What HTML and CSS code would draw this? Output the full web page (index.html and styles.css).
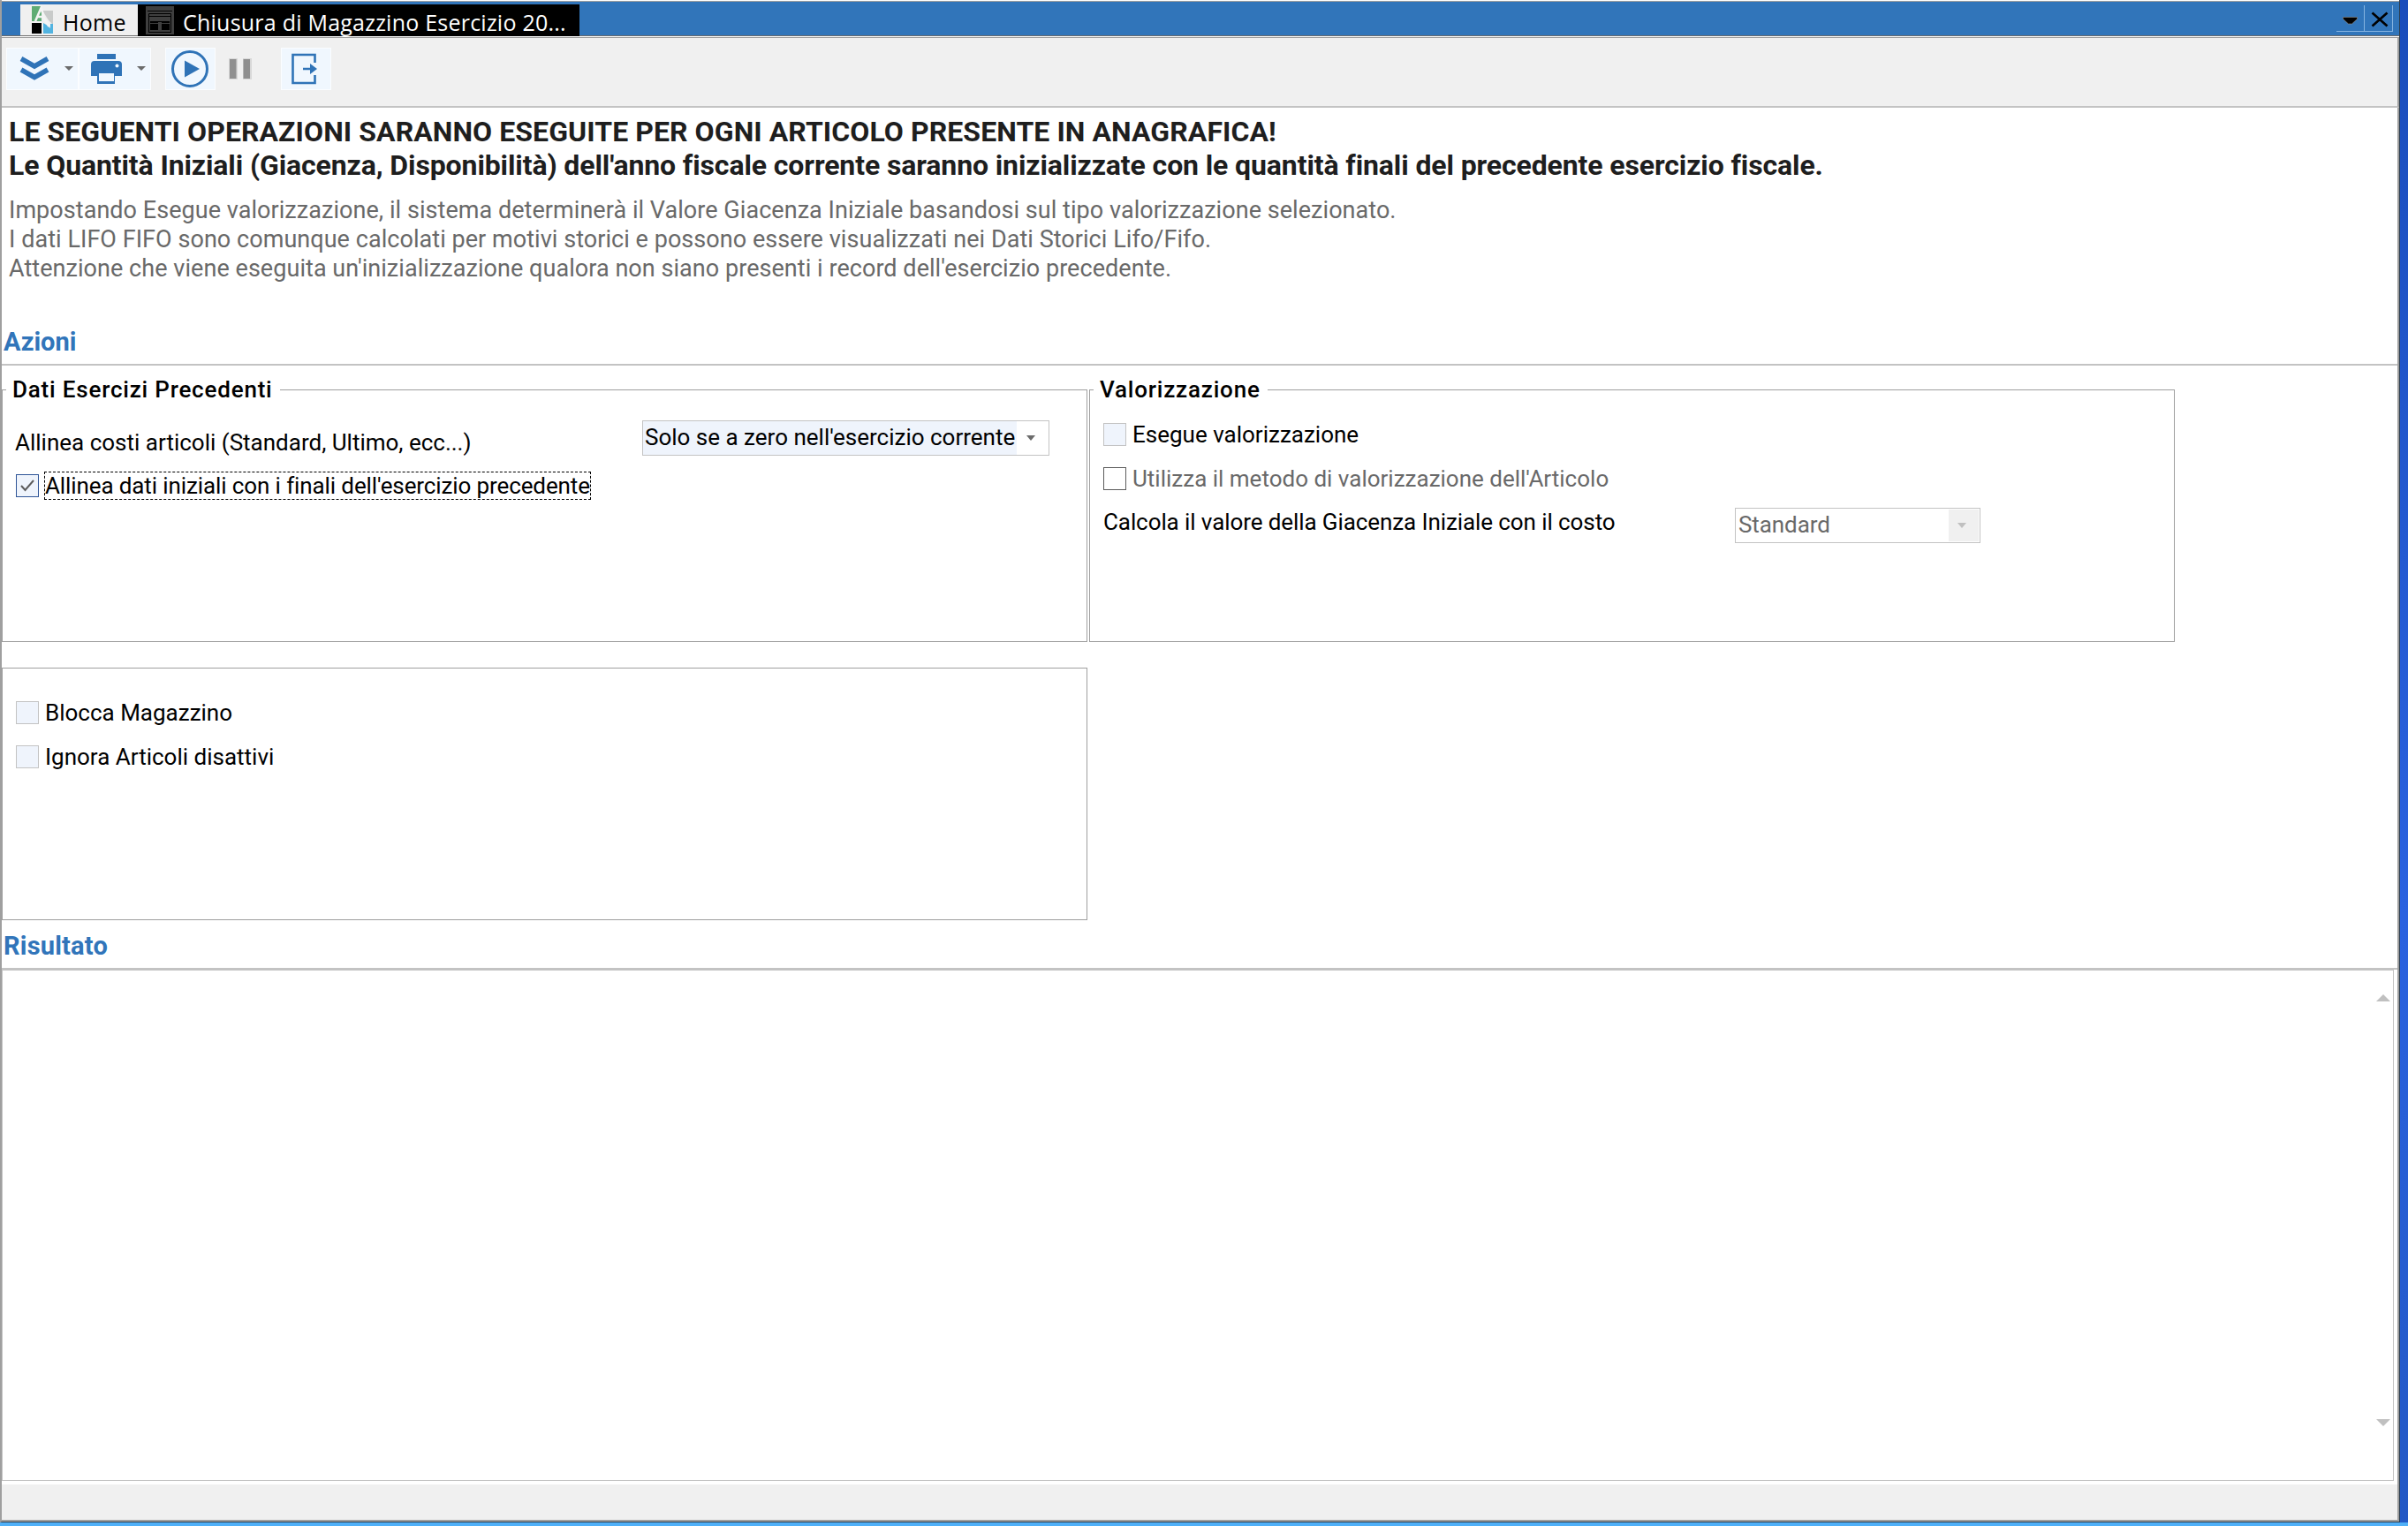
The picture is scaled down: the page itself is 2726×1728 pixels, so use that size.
FILE: index.html
```
<!DOCTYPE html>
<html lang="it">
<head>
<meta charset="utf-8">
<title>Chiusura di Magazzino</title>
<link rel="stylesheet" href="styles.css">
</head>
<body>
<div class="window">
  <header class="tabbar">
    <div class="tab tab-home">
      <svg class="logo" width="24" height="32" viewBox="0 0 24 32"><path fill="#5fac74" d="M0 1h11v17H0z"/><path fill="#c9cbca" d="M12 6h12v16l-5-5z"/><path fill="#000" d="M0 20h11v12H0z"/><path fill="#52b3e0" d="M13 20l5 3 3 3v-5h3v11H13z"/><path d="M4 18L10.500 3l4 13 5 8M7 13h6" stroke="#f4f4f4" stroke-width="2.600" fill="none"/></svg>
      <span class="tab-text home-text">Home</span>
    </div>
    <div class="tab tab-active">
      <svg class="form-icon" width="32" height="32" viewBox="0 0 32 32"><path fill="#3f3f3f" d="M0 0h32v32H0z"/><path stroke="#000" stroke-width="1" fill="none" d="M2 5.500h28M3.500 29V8.500h25V29M4 11.500h24M5 17.500h22M3 29.500h26"/><path fill="#000" d="M5 18h9v9H5zM18 18h9v9h-9z"/><path stroke="#3f3f3f" d="M5 19.500h22"/></svg>
      <span class="tab-text title-text">Chiusura di Magazzino Esercizio 20...</span>
    </div>
    <div class="window-buttons">
      <span class="wbtn wbtn-menu"><svg width="17" height="9" viewBox="0 0 17 9"><path fill="#000" stroke="#9a8f80" stroke-width=".6" d="M.5.5h16v2L10.500 8h-4L.5 2.500z"/></svg></span>
      <span class="wbtn wbtn-close"><svg width="20" height="18" viewBox="0 0 20 18"><path stroke="#000" stroke-width="2.600" d="M1.500 1.500l17 15M18.500 1.500l-17 15"/></svg></span>
    </div>
  </header>

  <nav class="toolbar">
    <span class="tool tool-split"><svg width="82" height="48" viewBox="0 0 82 48"><path fill="none" stroke="#2f73b7" stroke-width="5.500" d="M17 12.500l15 8.500 15-8.500M17 25l15 8.500L47 25"/><path fill="#6b6b6b" d="M66 21h10l-5 5z"/></svg></span>
    <span class="tool tool-split"><svg width="82" height="48" viewBox="0 0 82 48"><path fill="#2f73b7" d="M21 7h21v6H21zM18 15h27q4 0 4 4v13H41v9H21v-9h-7V19q0-4 4-4z"/><path fill="#f0f7fe" d="M23 29h17v9H23z"/><circle cx="43.500" cy="20.500" r="2" fill="#f0f7fe"/><path fill="#6b6b6b" d="M66 21h10l-5 5z"/></svg></span>
    <span class="tool tool-play"><svg width="57" height="48" viewBox="0 0 57 48"><circle cx="28" cy="24" r="19.500" fill="none" stroke="#2f73b7" stroke-width="3"/><path fill="#2f73b7" d="M22 14.500v19l17-9.500z"/></svg></span>
    <span class="tool-pause"><svg width="26" height="26" viewBox="0 0 26 26"><path fill="#d8d8d8" d="M0 1h10v24H0zM16 1h10v24H16z"/><path fill="#8f8f8f" d="M1 2h7.500v22H1zM16.500 2H24v22h-7.500z"/></svg></span>
    <span class="tool tool-exit"><svg width="57" height="48" viewBox="0 0 57 48"><path fill="none" stroke="#2f73b7" stroke-width="2.600" d="M38.500 17V8h-25v32h25v-9M25 24h11"/><path fill="#2f73b7" d="M33 18l8 6-8 6z"/></svg></span>
  </nav>

  <main class="content">
    <section class="notice">
      <p class="warn"><span class="warn-scope">LE SEGUENTI OPERAZIONI SARANNO ESEGUITE PER OGNI ARTICOLO PRESENTE IN ANAGRAFICA!</span><br><span class="warn-detail">Le Quantità Iniziali (Giacenza, Disponibilità) dell'anno fiscale corrente saranno inizializzate con le quantità finali del precedente esercizio fiscale.</span></p>
      <p class="info">Impostando Esegue valorizzazione, il sistema determinerà il Valore Giacenza Iniziale basandosi sul tipo valorizzazione selezionato.<br>I dati LIFO FIFO sono comunque calcolati per motivi storici e possono essere visualizzati nei Dati Storici Lifo/Fifo.<br>Attenzione che viene eseguita un'inizializzazione qualora non siano presenti i record dell'esercizio precedente.</p>
    </section>
    <h2 class="section-title">Azioni</h2>

    <div class="groups">
      <section class="group group-years">
        <h3 class="legend">Dati Esercizi Precedenti</h3>
        <div class="row row-costs">
          <span class="row-label">Allinea costi articoli (Standard, Ultimo, ecc...)</span>
          <div class="select select-wide"><span class="select-value">Solo se a zero nell'esercizio corrente</span><span class="select-arrow"></span></div>
        </div>
        <label class="check-row"><span class="check check-on"><svg width="16" height="16" viewBox="0 0 16 16"><path fill="none" stroke="#5c5c5c" stroke-width="2" d="M1 8l4.500 5L15 2"/></svg></span><span class="check-text focused">Allinea dati iniziali con i finali dell'esercizio precedente</span></label>
      </section>
      <section class="group group-value">
        <h3 class="legend">Valorizzazione</h3>
        <label class="check-row"><span class="check"></span><span class="check-text">Esegue valorizzazione</span></label>
        <label class="check-row disabled"><span class="check check-off"></span><span class="check-text">Utilizza il metodo di valorizzazione dell'Articolo</span></label>
        <div class="row row-cost">
          <span class="row-label">Calcola il valore della Giacenza Iniziale con il costo</span>
          <div class="select select-off"><span class="select-value">Standard</span><span class="select-arrow"></span></div>
        </div>
      </section>
    </div>

    <section class="group group-options">
      <label class="check-row"><span class="check"></span><span class="check-text">Blocca Magazzino</span></label>
      <label class="check-row"><span class="check"></span><span class="check-text">Ignora Articoli disattivi</span></label>
    </section>

    <h2 class="section-title result-title">Risultato</h2>
    <div class="result"><span class="scroll-up"></span><span class="scroll-down"></span></div>
  </main>
  <footer class="statusbar"></footer>
</div>
</body>
</html>
```
FILE: styles.css
```
* { box-sizing: border-box; }
html, body { margin: 0; height: 100%; }

body {
  background: linear-gradient(#1a4dbb, #2a62e0 60%, #2358c4);
  font: 26px/30px Roboto, "Liberation Sans", sans-serif;
  color: #000;
  overflow: hidden;
  padding-right: 9px;
  border-bottom: 4px solid #4fb0f8;
}

h2, h3, p { margin: 0; }
svg { display: block; }

.window {
  height: 1724px;
  display: flex;
  flex-direction: column;
  background: #fff;
  border-left: 2px solid #9f9f9f;
  border-right: 1px solid #2d3e50;
  border-bottom: 1px solid #2d3e50;
}

/* Document tabs */
.tabbar {
  height: 43px;
  flex: none;
  display: flex;
  align-items: flex-start;
  background: linear-gradient(#fff 0 1px, #9f9f9f 1px 2px, #3175ba 2px 40px, #6b6b6b 40px 41px, #fff 41px 42px, #9f9f9f 42px 43px);
  padding: 5px 7px 0 21px;
}
.tab { display: flex; font: 25px/36px "Open Sans", "Noto Sans", sans-serif; white-space: nowrap; }
.tab-home { width: 133px; height: 35px; background: #f0f0f0; padding-left: 13px; }
.logo { margin-top: 1px; }
.home-text { margin: 2px 0 0 11px; letter-spacing: .3px; }
.tab-active { width: 500px; height: 36px; background: #000; color: #fff; padding-left: 9px; }
.form-icon { margin-top: 2px; }
.title-text { margin: 2px 0 0 10px; letter-spacing: .23px; }

.window-buttons { margin-left: auto; display: flex; padding-top: 1px; }
.wbtn { width: 32px; height: 30px; display: flex; align-items: center; justify-content: center; border-right: 1px solid #86b4e0; border-bottom: 1px solid #86b4e0; }
.wbtn-menu { padding-top: 6px; }
.wbtn-close { padding: 2px 0 0 2px; }

/* Command toolbar */
.toolbar {
  height: 79px;
  flex: none;
  display: flex;
  align-items: flex-start;
  background: #f0f0f0;
  border-bottom: 2px solid #c3c3c3;
  border-right: 2px solid #9f9f9f;
  padding: 11px 0 0 5px;
}
.tool { height: 48px; background: #f0f7fe; box-shadow: inset 0 0 0 1px #fbfdff; }
.tool-split { width: 82px; }
.tool-play { margin-left: 16px; }
.tool-pause { margin: 11px 33px 0 15px; }

.content { flex: 1; display: flex; flex-direction: column; border-right: 2px solid #9f9f9f; }

.notice { height: 240px; padding: 8px 0 0 8px; white-space: nowrap; }
.warn { font-size: 32px; line-height: 38px; font-weight: 700; color: #1e1e1e; }
.warn-scope { letter-spacing: .075px; }
.warn-detail { letter-spacing: -.115px; }
.info { font-size: 27px; line-height: 33px; color: #696969; margin-top: 16px; letter-spacing: .05px; }

.section-title { height: 52px; font-size: 29px; line-height: 34px; font-weight: 700; color: #3175ba; padding: 8px 0 0 2px; border-bottom: 2px solid #c3c3c3; }

/* Option groups */
.groups { display: flex; gap: 2px; padding-top: 27px; }
.group { border: 1px solid #9f9f9f; width: 1229px; height: 286px; display: flex; flex-direction: column; }
.legend { align-self: flex-start; font-size: 26px; line-height: 30px; font-weight: 500; letter-spacing: .8px; background: #fff; margin: -16px 0 0 4px; padding: 0 8px 0 7px; height: 30px; }

.row { display: flex; justify-content: space-between; white-space: nowrap; }
.row-costs { padding: 20px 42px 0 14px; margin-bottom: 9px; }
.row-costs .row-label { margin-top: 10px; }
.select { border: 1px solid #c3c3c3; height: 40px; display: flex; }
.select-value { flex: 1; padding-left: 3px; line-height: 36px; }
.select-arrow { width: 36px; padding-right: 5px; display: flex; align-items: center; justify-content: center; }
.select-arrow::before { content: ""; border: 5px solid transparent; border-top: 6px solid #6b6b6b; border-bottom: 0; }
.select-wide { width: 461px; }
.select-wide .select-value { background: #eff4fc; padding-left: 2px; }
.select-off { width: 278px; color: #696969; }
.select-off .select-arrow { background: #f0f0f0; border: 1px solid #fff; }
.select-off .select-arrow::before { border-top-color: #c0c0c0; }

.check-row { display: flex; align-items: center; height: 50px; padding-left: 15px; white-space: nowrap; }
.check { width: 26px; height: 26px; border: 1px solid #c3c3c3; background: #eff4fc; display: flex; align-items: center; justify-content: center; }
.check-on { border-color: #2f5597; }
.check-off { border-color: #5c5c5c; background: #fff; }
.check-text { margin-left: 7px; }
.focused { outline: 1px dashed #000; letter-spacing: -.11px; }
.disabled { color: #696969; }
.group-value .legend { margin-bottom: 11px; }
.row-cost { padding: 8px 219px 0 15px; letter-spacing: -.09px; }
.row-cost .row-label { margin-top: 1px; }
.group-options { margin-top: 29px; padding-top: 25px; }

/* Result log */
.result-title { height: 56px; padding-top: 12px; letter-spacing: .2px; }
.result { height: 579px; width: 2708px; border: 1px solid #c3c3c3; display: flex; flex-direction: column; justify-content: space-between; align-items: flex-end; padding: 27px 3px 61px 0; }
.scroll-up { border: 8px solid transparent; border-top: 0; border-bottom-color: #c0c0c0; }
.scroll-down { border: 8px solid transparent; border-bottom: 0; border-top-color: #c0c0c0; }
.statusbar { height: 42px; flex: none; background: #f0f0f0; border-right: 2px solid #9f9f9f; border-bottom: 2px solid #9f9f9f; }
```
